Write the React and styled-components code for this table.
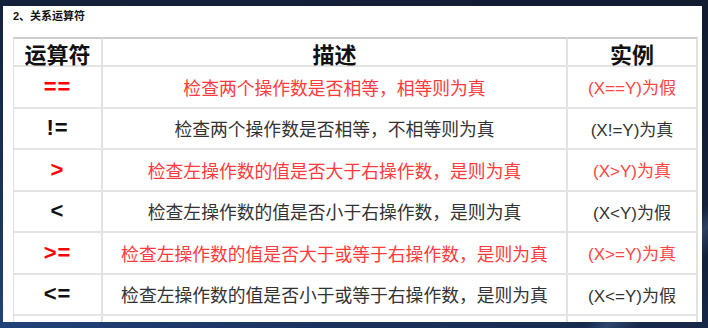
import React from 'react';
import styled, { createGlobalStyle } from 'styled-components';

const GlobalStyle = createGlobalStyle`
  html, body {
    margin: 0;
    padding: 0;
  }
  body {
    font-family: "Liberation Sans", "Noto Sans CJK SC", sans-serif;
  }
`;

const Stage = styled.div`
  width: 708px;
  height: 328px;
  box-sizing: border-box;
  padding: 6px 6px 6px 3px;
  overflow: hidden;
  background:
    linear-gradient(135deg, transparent 88%, rgba(90, 120, 170, 0.35) 90%, transparent 93%),
    linear-gradient(200deg, #121b30 0%, #15223d 45%, #1b3360 80%, #21427a 100%);
`;

const Panel = styled.div`
  height: 316px;
  box-sizing: border-box;
  background: #ffffff;
  padding: 0 4px 0 10px;
  overflow: hidden;
`;

const Title = styled.div`
  height: 31px;
  box-sizing: border-box;
  padding-top: 3px;
  font-size: 11px;
  font-weight: bold;
  line-height: 14px;
  color: #111;
`;

const Grid = styled.div`
  display: grid;
  grid-template-columns: 89px 465px 130px;
  grid-template-rows: 30px repeat(6, 41.5px) 10px;
  border-left: 1px solid #e0e0e0;
`;

const Cell = styled.div`
  display: flex;
  align-items: center;
  justify-content: center;
  box-sizing: border-box;
  border-right: 2px solid #e2e2e2;
  border-bottom: 2px solid #e4e4e4;
  border-top: ${(p) => (p.$head ? '2px solid #cdcdcd' : 'none')};
  white-space: nowrap;
`;

const HeadCell = styled(Cell)`
  font-size: 22px;
  font-weight: bold;
  color: #111;
  padding-top: 2px;
`;

const OpCell = styled(Cell)`
  font-size: 22px;
  font-weight: bold;
  color: ${(p) => (p.$red ? '#ff0000' : '#111')};
  letter-spacing: 1px;
`;

const DescCell = styled(Cell)`
  font-size: 17.8px;
  color: ${(p) => (p.$red ? '#ff3a3a' : '#333')};
`;

const ExampleCell = styled(Cell)`
  font-size: 17px;
  color: ${(p) => (p.$red ? '#ff4444' : '#333')};
`;

const TailCell = styled.div`
  border-right: 2px solid #e2e2e2;
`;

const rows = [
  { op: '==', desc: '检查两个操作数是否相等，相等则为真', ex: '(X==Y)为假', red: true },
  { op: '!=', desc: '检查两个操作数是否相等，不相等则为真', ex: '(X!=Y)为真', red: false },
  { op: '>', desc: '检查左操作数的值是否大于右操作数，是则为真', ex: '(X>Y)为真', red: true },
  { op: '<', desc: '检查左操作数的值是否小于右操作数，是则为真', ex: '(X<Y)为假', red: false },
  { op: '>=', desc: '检查左操作数的值是否大于或等于右操作数，是则为真', ex: '(X>=Y)为真', red: true },
  { op: '<=', desc: '检查左操作数的值是否小于或等于右操作数，是则为真', ex: '(X<=Y)为假', red: false },
];

const App = () => {
  return (
    <Stage>
      <GlobalStyle />
      <Panel>
        <Title>2、关系运算符</Title>
        <Grid>
          <HeadCell $head>运算符</HeadCell>
          <HeadCell $head>描述</HeadCell>
          <HeadCell $head>实例</HeadCell>
          {rows.map((r) => (
            <React.Fragment key={r.op}>
              <OpCell $red={r.red}>{r.op}</OpCell>
              <DescCell $red={r.red}>{r.desc}</DescCell>
              <ExampleCell $red={r.red}>{r.ex}</ExampleCell>
            </React.Fragment>
          ))}
          <TailCell />
          <TailCell />
          <TailCell />
        </Grid>
      </Panel>
    </Stage>
  );
};

export default App;
